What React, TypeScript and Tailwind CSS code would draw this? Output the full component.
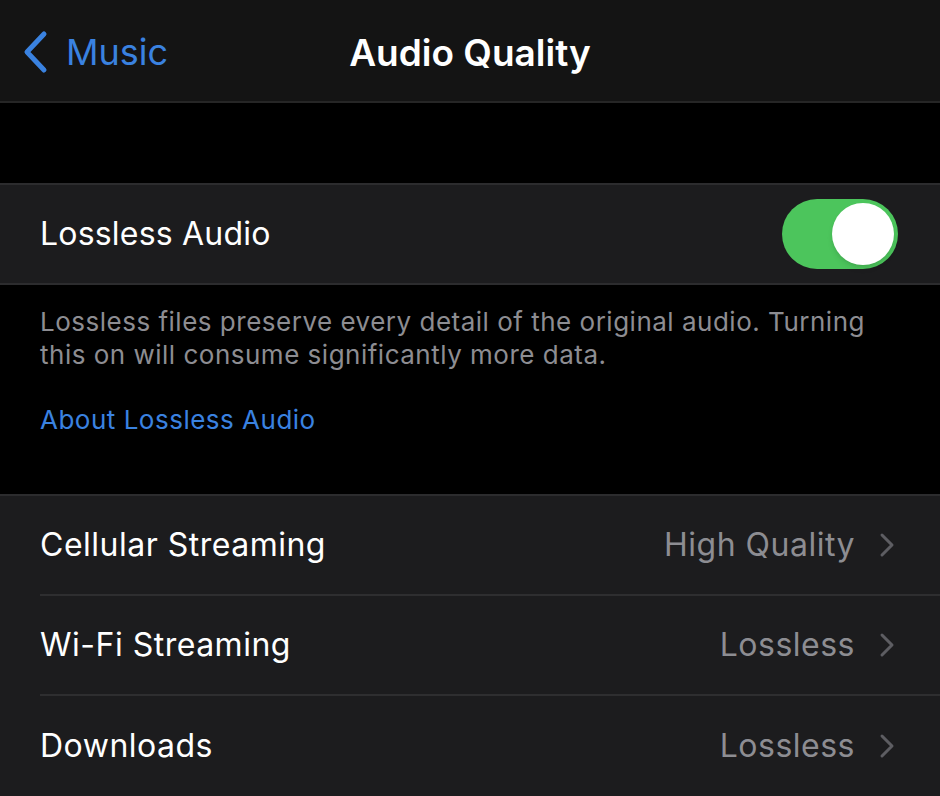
type Row = { label: string; value: string };

const rows: Row[] = [
  { label: "Cellular Streaming", value: "High Quality" },
  { label: "Wi-Fi Streaming", value: "Lossless" },
  { label: "Downloads", value: "Lossless" },
];

function BackChevron() {
  return (
    <svg width="28" height="44" viewBox="0 0 28 44" fill="none" className="shrink-0">
      <path
        d="M22 4 L5 22 L22 40"
        stroke="#3a82e0"
        strokeWidth="5"
        strokeLinecap="round"
        strokeLinejoin="round"
      />
    </svg>
  );
}

function RowChevron() {
  return (
    <svg width="16" height="26" viewBox="0 0 16 26" fill="none" className="shrink-0">
      <path
        d="M3 3 L13 13 L3 23"
        stroke="#5d5d62"
        strokeWidth="3"
        strokeLinecap="round"
        strokeLinejoin="round"
      />
    </svg>
  );
}

function Toggle() {
  return (
    <div className="flex h-[70px] w-[116px] items-center justify-end rounded-full bg-[#4cc55c] px-[4px]">
      <div className="h-[62px] w-[62px] rounded-full bg-white shadow-md" />
    </div>
  );
}

export default function App() {
  return (
    <div
      className="flex h-[796px] w-[940px] flex-col overflow-hidden bg-black text-white"
      style={{ fontFamily: "Inter, 'Noto Sans', sans-serif" }}
    >
      {/* nav bar */}
      <div className="relative flex h-[103px] shrink-0 items-center border-b-2 border-[#262626] bg-[#141414]">
        <div className="flex items-center gap-[16px] pl-[22px] pt-[2px]">
          <BackChevron />
          <span className="text-[36px] text-[#3a82e0]">Music</span>
        </div>
        <div className="pointer-events-none absolute inset-x-0 top-0 flex h-full items-center justify-center pt-[4px]">
          <span className="text-[37px] font-semibold">Audio Quality</span>
        </div>
      </div>

      {/* gap */}
      <div className="h-[80px] shrink-0" />

      {/* lossless row */}
      <div className="flex h-[102px] shrink-0 items-center justify-between border-y-2 border-[#2c2c2e] bg-[#1c1c1e] pl-[40px] pr-[42px]">
        <span className="text-[32px] tracking-[0.2px]">Lossless Audio</span>
        <Toggle />
      </div>

      {/* footer */}
      <div className="shrink-0 px-[40px] pt-[20px] pb-[58px] text-[26px] leading-[33px] tracking-[0.5px] text-[#8d8d92]">
        <p className="max-w-[850px]">
          Lossless files preserve every detail of the original audio. Turning this on will
          consume significantly more data.
        </p>
        <p className="mt-[32px] text-[#3a82e0]">About Lossless Audio</p>
      </div>

      {/* options */}
      <div className="flex flex-1 flex-col border-t-2 border-[#2c2c2e] bg-[#1c1c1e]">
        {rows.map((row, i) => (
          <div key={row.label} className="pl-[40px]">
            <div
              className={
                "flex h-[100px] items-center justify-between pr-[45px] " +
                (i < rows.length - 1 ? "border-b-2 border-[#2e2e30]" : "")
              }
            >
              <span className="text-[32px] tracking-[0.5px]">{row.label}</span>
              <div className="flex items-center gap-[24px] text-[32px] tracking-[0.5px] text-[#8d8d92]">
                <span>{row.value}</span>
                <RowChevron />
              </div>
            </div>
          </div>
        ))}
      </div>
    </div>
  );
}
